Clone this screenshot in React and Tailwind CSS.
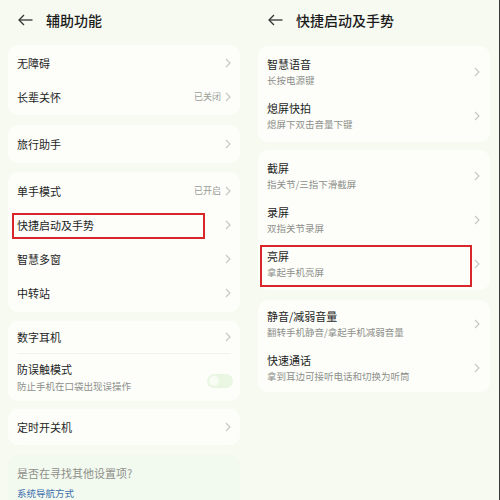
import React from "react";

const font = { fontFamily: '"Noto Sans CJK SC", "Noto Sans", sans-serif' };

function Chevron() {
  return (
    <svg width="6" height="10" viewBox="0 0 6 10" className="shrink-0">
      <polyline points="1,1 5,5 1,9" fill="none" stroke="#c4c7c0" strokeWidth="1.1" />
    </svg>
  );
}

function Back() {
  return (
    <svg width="15" height="12" viewBox="0 0 15 12" className="shrink-0">
      <polyline points="6,1 1,6 6,11" fill="none" stroke="#333" strokeWidth="1.3" />
      <line x1="1" y1="6" x2="14.5" y2="6" stroke="#333" strokeWidth="1.3" />
    </svg>
  );
}

function Header({ title }) {
  return (
    <div className="h-[40px] flex items-center pl-[18px]">
      <Back />
      <span className="ml-[13px] text-[14px] font-medium text-[#1c1c1c]">{title}</span>
    </div>
  );
}

function Row({ title, status, h = 34, highlight }) {
  return (
    <div className="relative flex items-center pl-[9px] pr-[9px]" style={{ height: h }}>
      <span className="text-[11px] text-[#1e1e1e] flex-1">{title}</span>
      {status && <span className="text-[9px] text-[#9a9c98] mr-[4px]">{status}</span>}
      <Chevron />
      {highlight}
    </div>
  );
}

function Row2({ title, sub, highlight }) {
  return (
    <div className="relative flex items-center h-[44px] pl-[9px] pr-[10px]">
      <div className="flex-1 flex flex-col">
        <span className="text-[11px] leading-[15px] text-[#1e1e1e]">{title}</span>
        <span className="text-[9.5px] leading-[15px] mt-[1px] text-[#8d8f8a]">{sub}</span>
      </div>
      <Chevron />
      {highlight}
    </div>
  );
}

function Card({ children, className = "" }) {
  return <div className={"bg-[#fdfefa] rounded-[10px] " + className}>{children}</div>;
}

export default function App() {
  return (
    <div className="w-[500px] h-[500px] overflow-hidden flex bg-[#f7faf1]" style={font}>
      {/* Left panel */}
      <div className="w-[250px] h-full flex flex-col">
        <Header title="辅助功能" />
        <div className="px-[8px] pr-[10px] flex flex-col">
          <Card className="mt-[5px] py-[1px]">
            <Row title="无障碍" />
            <Row title="长辈关怀" status="已关闭" />
          </Card>
          <Card className="mt-[10px]">
            <Row title="旅行助手" h={38} />
          </Card>
          <Card className="mt-[9px] py-[2px]">
            <Row title="单手模式" status="已开启" />
            <Row
              title="快捷启动及手势"
              highlight={
                <div className="absolute left-[4px] top-[5px] w-[193px] h-[26px] border-[2px] border-[#d8262a]" />
              }
            />
            <Row title="智慧多窗" />
            <Row title="中转站" />
          </Card>
          <Card className="mt-[9px]">
            <Row title="数字耳机" h={32} />
            <div className="mx-[9px] h-px bg-[#f0f2ec]" />
            <div className="flex items-center h-[47px] pl-[9px] pr-[7px]">
              <div className="flex-1 flex flex-col">
                <span className="text-[11px] leading-[15px] text-[#1e1e1e]">防误触模式</span>
                <span className="text-[9.5px] leading-[15px] mt-[2px] text-[#8d8f8a]">防止手机在口袋出现误操作</span>
              </div>
              <div className="w-[26px] h-[14px] rounded-full bg-[#e9f6e1] flex items-center justify-start pl-[2px] mt-[6px]">
                <div className="w-[10px] h-[10px] rounded-full bg-[#f8fcf4]" />
              </div>
            </div>
          </Card>
          <Card className="mt-[8px]">
            <Row title="定时开关机" h={36} />
          </Card>
        </div>
        <div className="mt-[10px] flex-1 px-[8px] pr-[10px]">
          <div className="h-full rounded-t-[10px] bg-[#f2f9ee] pl-[9px] pt-[10px]">
            <div className="text-[11px] leading-[16px] text-[#8e908b]">是否在寻找其他设置项?</div>
            <div className="text-[9.5px] leading-[14px] mt-[5px] text-[#3d6fae]">系统导航方式</div>
          </div>
        </div>
      </div>

      {/* Right panel */}
      <div className="w-[250px] h-full flex flex-col border-r border-[#3a3a3a]">
        <Header title="快捷启动及手势" />
        <div className="pl-[8px] pr-[9px] flex flex-col">
          <Card className="mt-[6px] py-[4px]">
            <Row2 title="智慧语音" sub="长按电源键" />
            <Row2 title="熄屏快拍" sub="熄屏下双击音量下键" />
          </Card>
          <Card className="mt-[8px] py-[4px]">
            <Row2 title="截屏" sub="指关节/三指下滑截屏" />
            <Row2 title="录屏" sub="双指关节录屏" />
            <Row2
              title="亮屏"
              sub="拿起手机亮屏"
              highlight={
                <div className="absolute left-[2px] top-[3px] w-[212px] h-[42px] border-[2px] border-[#d8262a]" />
              }
            />
          </Card>
          <Card className="mt-[10px] py-[2px]">
            <Row2 title="静音/减弱音量" sub="翻转手机静音/拿起手机减弱音量" />
            <Row2 title="快速通话" sub="拿到耳边可接听电话和切换为听筒" />
          </Card>
        </div>
      </div>
    </div>
  );
}
